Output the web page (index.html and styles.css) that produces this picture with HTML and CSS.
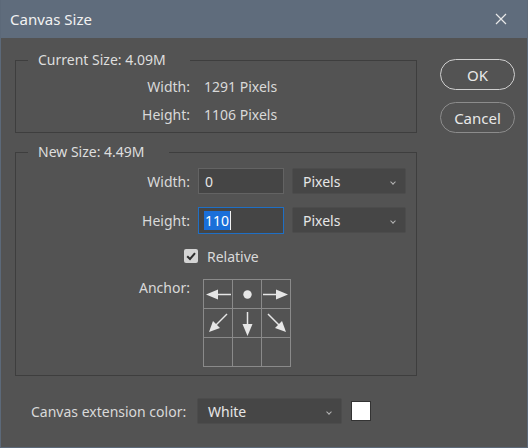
FILE: index.html
```html
<!DOCTYPE html>
<html>
<head>
<meta charset="utf-8">
<link rel="stylesheet" href="styles.css">
</head>
<body>
<div class="window">
  <div class="titlebar">
    <span class="title">Canvas Size</span>
    <svg class="close" width="12" height="12" viewBox="0 0 12 12"><path d="M1 1L11 11M11 1L1 11" stroke="#e8e8e8" stroke-width="1.2"/></svg>
  </div>
  <div class="content">
    <div class="main">
      <fieldset class="group current">
        <legend>Current Size: 4.09M</legend>
        <div class="row info"><span class="label">Width:</span><span class="value">1291 Pixels</span></div>
        <div class="row info"><span class="label">Height:</span><span class="value">1106 Pixels</span></div>
      </fieldset>
      <fieldset class="group newsize">
        <legend>New Size: 4.49M</legend>
        <div class="row field"><span class="label">Width:</span><div class="input">0</div><div class="select">Pixels<span class="chev"></span></div></div>
        <div class="row field"><span class="label">Height:</span><div class="input focused"><span class="sel">110</span><span class="caret"></span></div><div class="select">Pixels<span class="chev"></span></div></div>
        <div class="row check"><span class="label"></span><span class="box"><svg width="14" height="14" viewBox="0 0 14 14"><path d="M3.2 7.2L6 10L11 4.2" fill="none" stroke="#2e2e2e" stroke-width="2"/></svg></span><span class="checklabel">Relative</span></div>
        <div class="row anchor"><span class="label">Anchor:</span>
          <div class="grid">
            <div class="cell"><svg viewBox="0 0 28 28"><line x1="27" y1="14.5" x2="12" y2="14.5"/><polygon points="2,14.5 14,9.5 14,19.5"/></svg></div>
            <div class="cell"><svg viewBox="0 0 28 28"><circle cx="14.5" cy="14.5" r="4.2"/></svg></div>
            <div class="cell"><svg viewBox="0 0 28 28"><line x1="1" y1="14.5" x2="16" y2="14.5"/><polygon points="26,14.5 14,9.5 14,19.5"/></svg></div>
            <div class="cell"><svg viewBox="0 0 28 28"><line x1="23" y1="5" x2="12" y2="16"/><polygon points="5,23 9,12 16,19"/></svg></div>
            <div class="cell"><svg viewBox="0 0 28 28"><line x1="14.5" y1="3" x2="14.5" y2="17"/><polygon points="14.5,27 9.5,15 19.5,15"/></svg></div>
            <div class="cell"><svg viewBox="0 0 28 28"><line x1="6" y1="5" x2="17" y2="16"/><polygon points="24,23 13,19 20,12"/></svg></div>
            <div class="cell"></div>
            <div class="cell"></div>
            <div class="cell"></div>
          </div>
        </div>
      </fieldset>
      <div class="extrow">
        <span class="extlabel">Canvas extension color:</span>
        <div class="select wide">White<span class="chev"></span></div>
        <span class="swatch"></span>
      </div>
    </div>
    <div class="buttons">
      <div class="btn ok">OK</div>
      <div class="btn cancel">Cancel</div>
    </div>
  </div>
</div>
</body>
</html>
```
FILE: styles.css
```css
* { box-sizing: border-box; }
html, body { margin: 0; padding: 0; background: #535353; }
body { font-family: "Noto Sans", "Open Sans", sans-serif; color: #d9d9d9; font-size: 14px; }
.window {
  width: 528px; height: 448px;
  background: #535353;
  border: 1px solid #5c6979; border-top: none;
  overflow: hidden;
}
.titlebar {
  height: 38px; background: #5f6c7c;
  display: flex; align-items: center; justify-content: space-between;
  padding: 0 20px 0 9px;
}
.title { font-size: 15px; color: #f2f2f2; }
.close { display: block; }
.content { display: flex; align-items: flex-start; }
.main { width: 402px; margin-left: 14px; display: flex; flex-direction: column; }
.group {
  margin: 0; padding: 0;
  border: 1px solid #3e3e3e;
  min-width: 0;
}
.group legend {
  margin-left: 12px; padding: 0 24px 0 10px;
  line-height: 20px; height: 20px; color: #dedede; font-size: 14px;
}
.current { margin-top: 12px; padding: 2px 0 4px 0; }
.newsize { margin-top: 9px; padding: 6px 0 8px 0; }
.row { display: flex; align-items: center; }
.label { width: 174px; text-align: right; flex: none; }
.info { height: 28px; }
.info .value { margin-left: 14px; }
.field { height: 26px; margin-bottom: 13px; }
.field .label { margin-right: 8px; }
.input {
  width: 86px; height: 26px; background: #454545;
  border: 1px solid #636363; padding-left: 6px;
  display: flex; align-items: center; color: #e6e6e6;
}
.input.focused { border-color: #1f6fc5; padding-left: 5px; height: 27px; }
.sel { background: #1a6fd9; color: #fff; line-height: 19px; padding: 0 1px; }
.caret { width: 1px; height: 19px; background: #f0f0f0; }
.select {
  position: relative;
  width: 114px; height: 26px; margin-left: 8px;
  background: #464646; border: 1px solid #4c4c4c; border-radius: 2px;
  padding-left: 10px; display: flex; align-items: center; color: #e6e6e6;
}
.chev {
  position: absolute; right: 10px; top: 11px;
  width: 4px; height: 4px; border-right: 1px solid #b5b5b5; border-bottom: 1px solid #b5b5b5;
  transform: rotate(45deg);
}
.check { height: 20px; margin-bottom: 13px; }
.box {
  margin-left: -6px; width: 14px; height: 14px; background: #d4d4d4; border-radius: 2px; display: block;
}
.box svg { display: block; }
.checklabel { margin-left: 9px; }
.anchor { align-items: flex-start; }
.anchor .label { margin-right: 13px; line-height: 18px; }
.grid {
  display: grid; grid-template-columns: repeat(3, 28px); grid-template-rows: repeat(3, 28px);
  gap: 1px; background: #8a8a8a; border: 1px solid #8a8a8a;
}
.cell { background: #535353; }
.cell svg { display: block; width: 28px; height: 28px; }
.cell line { stroke: #e6e6e6; stroke-width: 1.5; }
.cell polygon, .cell circle { fill: #e6e6e6; }
.extrow { display: flex; align-items: center; margin-top: 22px; height: 26px; }
.extlabel { margin-left: 16px; width: 166px; }
.select.wide { width: 145px; margin-left: 0; }
.swatch { width: 20px; height: 20px; background: #ffffff; border: 1px solid #333; margin-left: 9px; }
.buttons { margin-left: 23px; margin-top: 21px; display: flex; flex-direction: column; gap: 12px; }
.btn {
  width: 75px; height: 31px; border-radius: 16px;
  display: flex; align-items: center; justify-content: center;
  font-size: 15px; color: #e8e8e8;
}
.ok { border: 1.5px solid #cfcfcf; }
.cancel { border: 1.5px solid #8c8c8c; }
```
